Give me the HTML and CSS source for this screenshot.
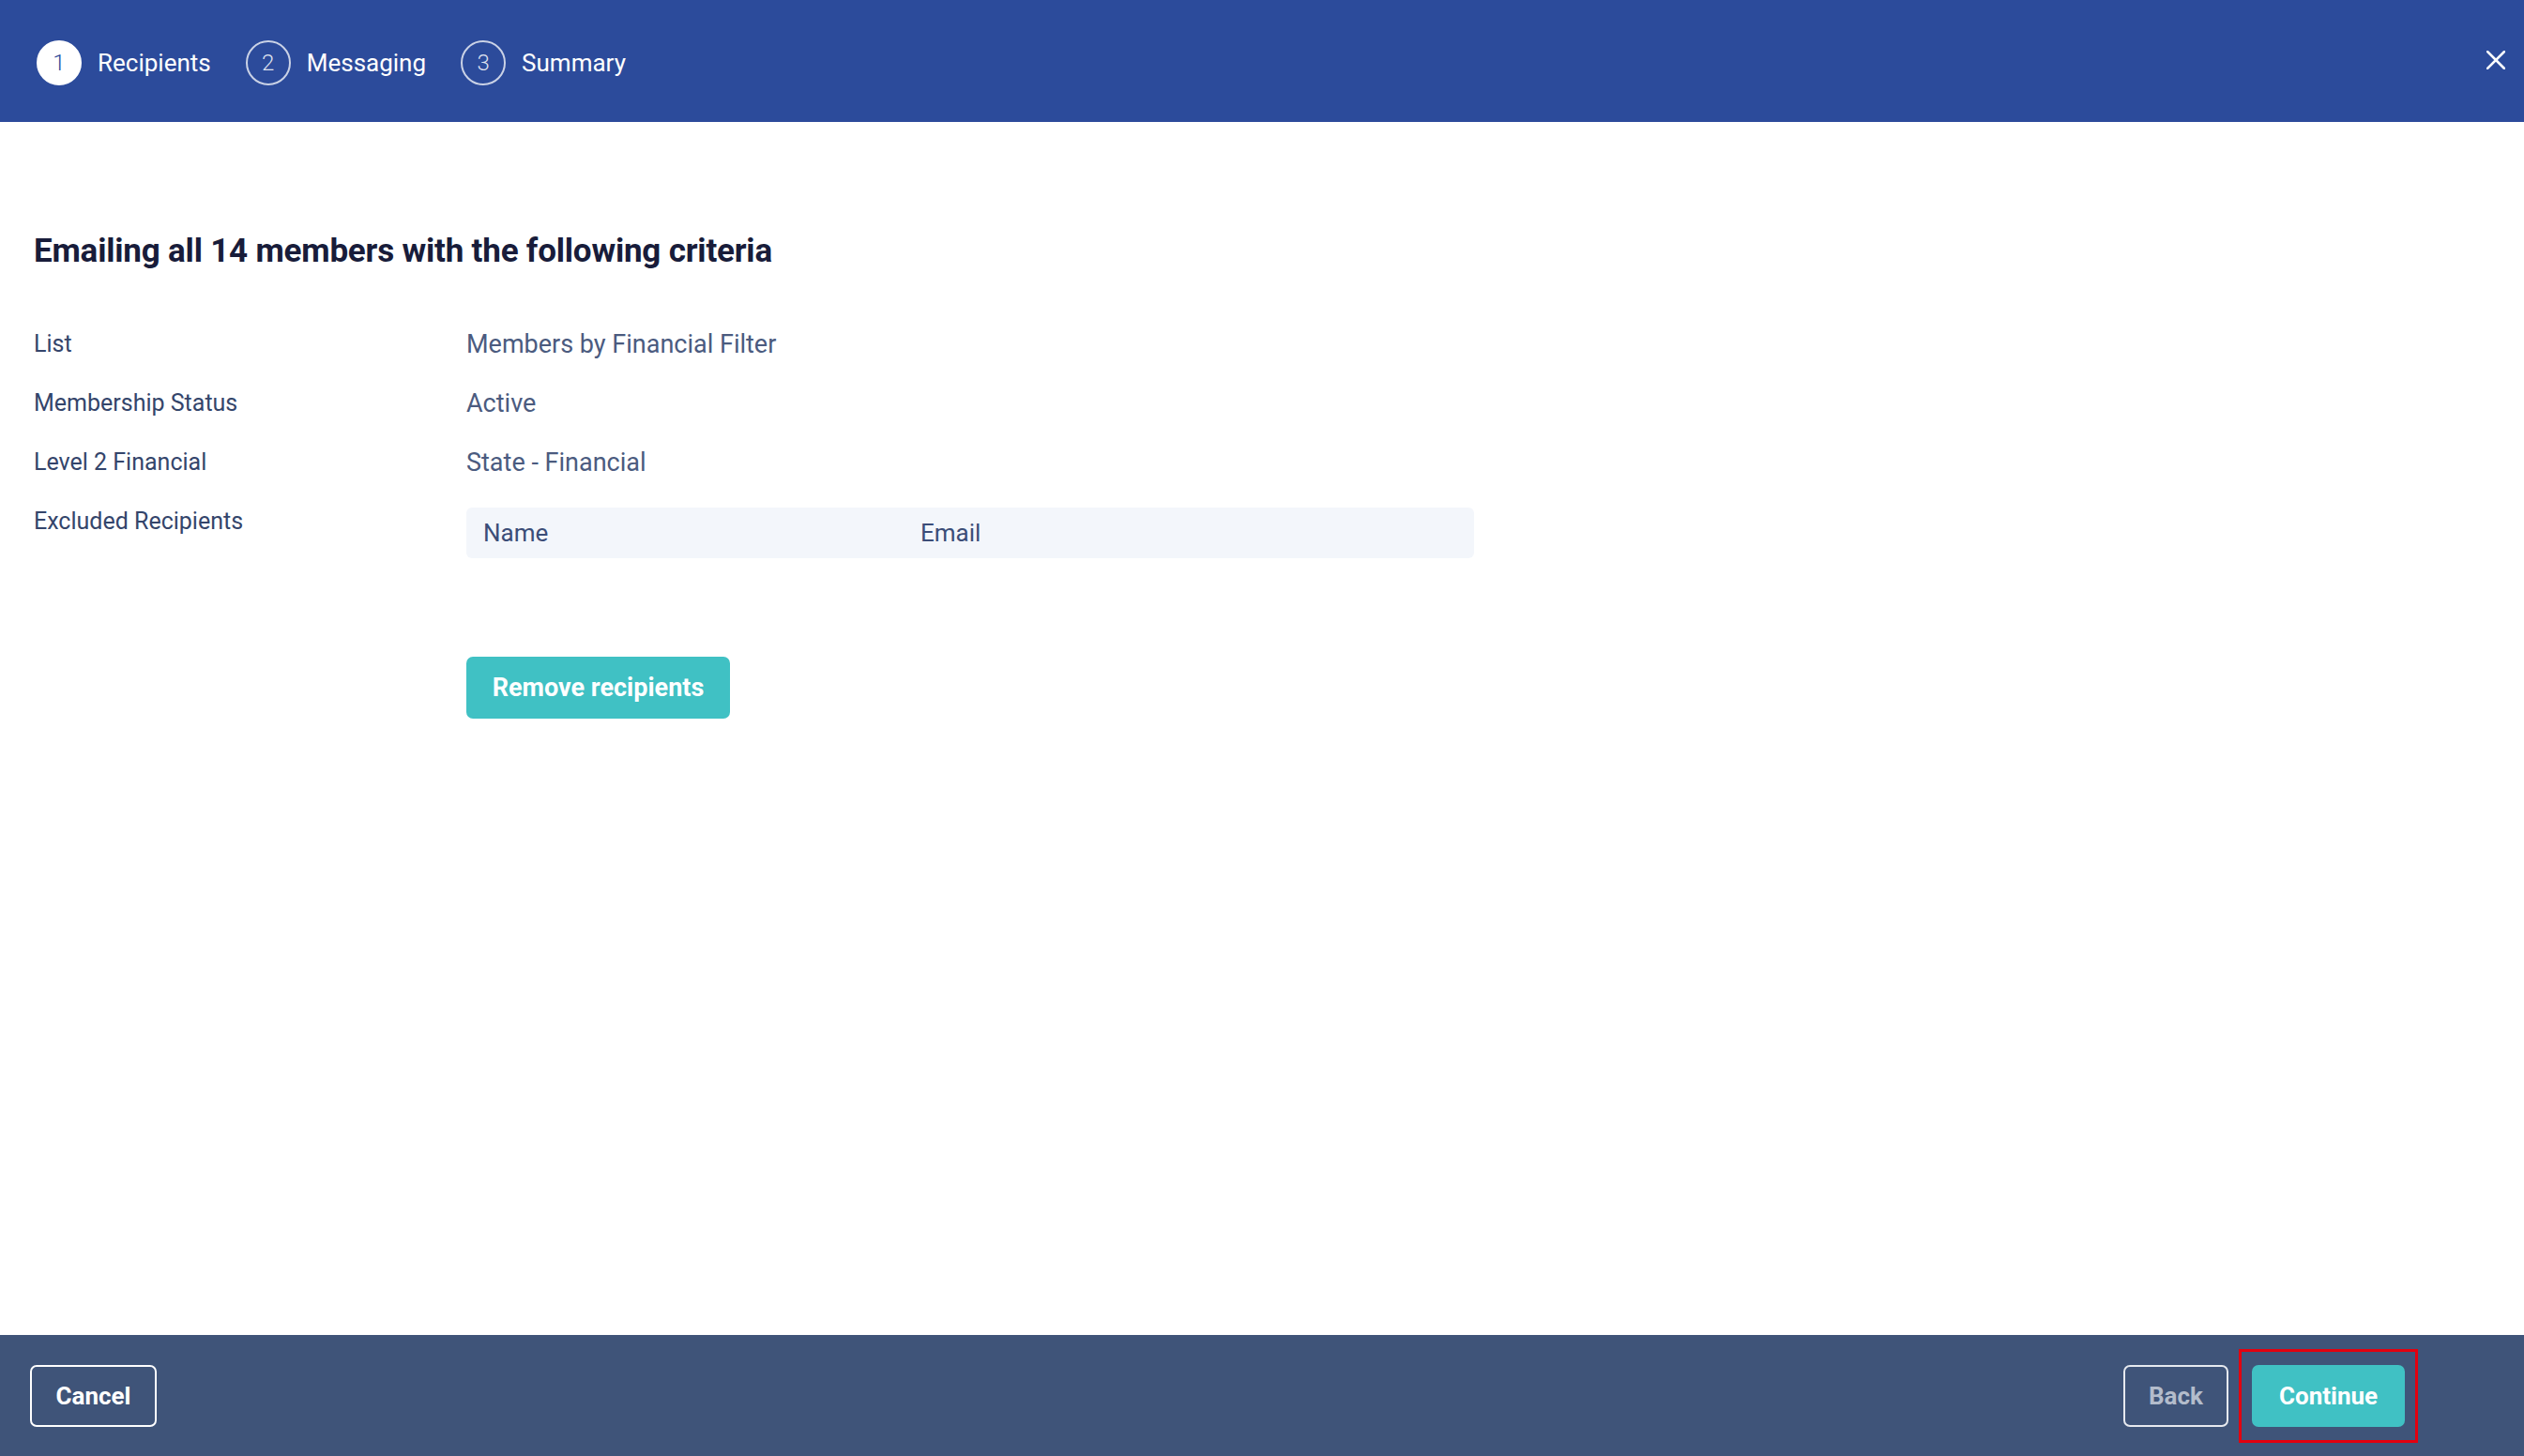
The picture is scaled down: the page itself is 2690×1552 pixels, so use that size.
FILE: index.html
```html
<!DOCTYPE html>
<html lang="en">
<head>
    <meta charset="UTF-8"/>
    <meta name="viewport" content="width=device-width, initial-scale=1.0"/>
    <title>Email members - Recipients</title>
    <link rel="stylesheet" href="styles.css">
</head>
<body>
<div class="wizard">
    <header class="steps-bar">
        <ol class="steps">
            <li class="step active"><span class="step-num">1</span>Recipients</li>
            <li class="step"><span class="step-num">2</span>Messaging</li>
            <li class="step"><span class="step-num">3</span>Summary</li>
        </ol>
        <button class="close" aria-label="Close">
            <svg width="20" height="20" viewBox="0 0 20 20">
                <path d="M1 1 L19 19 M19 1 L1 19" stroke="#fff" stroke-width="2.6" stroke-linecap="square"/>
            </svg>
        </button>
    </header>

    <main class="content">
        <h1>Emailing all 14 members with the following criteria</h1>

        <div class="criteria">
            <div class="label">List</div>
            <div class="value">Members by Financial Filter</div>

            <div class="label">Membership Status</div>
            <div class="value">Active</div>

            <div class="label">Level 2 Financial</div>
            <div class="value">State - Financial</div>

            <div class="label">Excluded Recipients</div>
            <div class="value">
                <div class="excluded">
                    <span class="col-name">Name</span>
                    <span class="col-email">Email</span>
                </div>
                <button class="btn btn-teal remove">Remove recipients</button>
            </div>
        </div>
    </main>

    <footer class="actions">
        <button class="btn btn-outline">Cancel</button>
        <div class="actions-right">
            <button class="btn btn-outline muted">Back</button>
            <div class="highlight">
                <button class="btn btn-teal">Continue</button>
            </div>
        </div>
    </footer>
</div>
</body>
</html>
```

FILE: styles.css
```css
body {
    margin: 0;
    padding: 0;
    font-family: Roboto, "Noto Sans", sans-serif;
    background: #fff;
    color: #3a4a6e;
}

.wizard {
    display: flex;
    flex-direction: column;
    height: 100vh;
}

.steps-bar {
    height: 130px;
    flex-shrink: 0;
    background-color: #2c4b9b;
    display: flex;
    align-items: center;
    justify-content: space-between;
    padding: 3px 20px 0 39px;
    box-sizing: border-box;
}

.steps {
    list-style: none;
    margin: 0;
    padding: 0;
    display: flex;
    gap: 37px;
}

.step {
    display: flex;
    align-items: center;
    gap: 17px;
    color: #fff;
    font-size: 26px;
}

.step-num {
    width: 48px;
    height: 48px;
    border-radius: 50%;
    box-sizing: border-box;
    border: 2px solid rgba(255, 255, 255, 0.75);
    display: flex;
    align-items: center;
    justify-content: center;
    font-size: 24px;
    font-weight: 300;
    color: rgba(255, 255, 255, 0.85);
}

.step.active .step-num {
    background: #fff;
    border-color: #fff;
    color: #2c4b9b;
}

.close {
    background: none;
    border: 0;
    padding: 0;
    width: 20px;
    height: 20px;
    cursor: pointer;
    margin-top: -6px;
}

.close svg {
    display: block;
}

.content {
    flex: 1;
    padding: 118px 36px 0;
}

h1 {
    margin: 0 0 61px;
    font-size: 35px;
    line-height: 40px;
    font-weight: 700;
    color: #181c3a;
    letter-spacing: -0.2px;
}

.criteria {
    display: grid;
    grid-template-columns: 461px 1074px;
    row-gap: 27px;
    line-height: 36px;
}

.label {
    font-size: 25px;
    color: #34456b;
}

.value {
    font-size: 27px;
    color: #4b5b7f;
}

.excluded {
    margin-top: 3px;
    height: 54px;
    background: #f3f6fb;
    border-radius: 6px;
    display: grid;
    grid-template-columns: 466px 1fr;
    align-items: center;
    padding-left: 18px;
    font-size: 26px;
    color: #3b4d78;
}

.btn {
    font-family: Roboto, "Noto Sans", sans-serif;
    font-size: 26px;
    font-weight: 700;
    height: 66px;
    border-radius: 7px;
    cursor: pointer;
    box-sizing: border-box;
}

.btn-teal {
    background: #40c1c4;
    border: 0;
    color: #fff;
}

.remove {
    margin-top: 105px;
    width: 281px;
    height: 66px;
    font-size: 27px;
}

.actions {
    height: 129px;
    flex-shrink: 0;
    background-color: #3f5479;
    display: flex;
    align-items: center;
    justify-content: space-between;
    padding: 0 113px 0 32px;
    box-sizing: border-box;
}

.btn-outline {
    background: transparent;
    border: 2px solid #fff;
    color: #fff;
    width: 135px;
}

.btn-outline.muted {
    width: 112px;
    color: #b3bccb;
    border-color: #e6e9ef;
}

.actions-right {
    display: flex;
    align-items: center;
    gap: 11px;
}

.highlight {
    border: 3px solid #e3000f;
    padding: 14px 11px;
}

.highlight .btn {
    width: 163px;
    display: block;
}
```
